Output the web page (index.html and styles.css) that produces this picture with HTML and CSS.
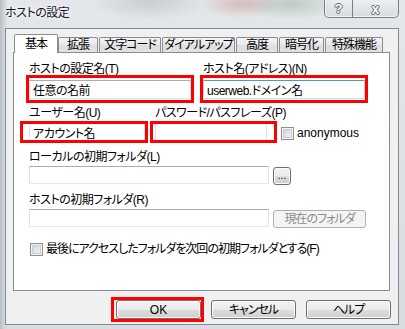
FILE: index.html
```html
<!DOCTYPE html>
<html lang="ja">
<head>
    <meta charset="UTF-8">
    <meta name="viewport" content="width=device-width, initial-scale=1.0">
    <title>ホストの設定</title>
    <link rel="stylesheet" href="styles.css">
</head>
<body>
    <div class="window">
        <div class="titlebar">
            <span class="title">ホストの設定</span>
            <div class="caption-buttons">
                <span class="cap-btn cap-help">?</span>
                <span class="cap-btn cap-close">x</span>
            </div>
        </div>

        <div class="client">
            <div class="tabs">
                <span class="tab active">基本</span>
                <span class="tab">拡張</span>
                <span class="tab">文字コード</span>
                <span class="tab">ダイアルアップ</span>
                <span class="tab">高度</span>
                <span class="tab">暗号化</span>
                <span class="tab">特殊機能</span>
            </div>

            <div class="panel">
                <div class="row row-first">
                    <div class="field">
                        <label class="field-label">ホストの設定名(T)</label>
                        <span class="mark mark-wide"><input class="text w-half" type="text" value="任意の名前"></span>
                    </div>
                    <div class="field">
                        <label class="field-label">ホスト名(アドレス)(N)</label>
                        <span class="mark mark-wide"><input class="text w-half hover" type="text" value="userweb.ドメイン名"></span>
                    </div>
                </div>

                <div class="row row-second">
                    <div class="field w-user">
                        <label class="field-label">ユーザー名(U)</label>
                        <span class="mark mark-user"><input class="text w-user" type="text" value="アカウント名"></span>
                    </div>
                    <div class="field field-pass w-pass">
                        <label class="field-label">パスワード/パスフレーズ(P)</label>
                        <span class="mark mark-pass"><input class="text w-pass" type="text" value=""></span>
                    </div>
                    <div class="check-item check-anon">
                        <span class="check"></span>
                        <span class="latin">anonymous</span>
                    </div>
                </div>

                <div class="row-block">
                    <label class="field-label">ローカルの初期フォルダ(L)</label>
                    <div class="line">
                        <input class="text w-folder" type="text" value="">
                        <button class="btn btn-browse">...</button>
                    </div>
                </div>

                <div class="row-block">
                    <label class="field-label">ホストの初期フォルダ(R)</label>
                    <div class="line">
                        <input class="text w-folder" type="text" value="">
                        <button class="btn btn-current" disabled>現在のフォルダ</button>
                    </div>
                </div>

                <div class="check-item check-last">
                    <span class="check"></span>
                    <span>最後にアクセスしたフォルダを次回の初期フォルダとする(F)</span>
                </div>
            </div>

            <div class="actions">
                <span class="mark mark-ok"><button class="btn btn-action latin">OK</button></span>
                <button class="btn btn-action">キャンセル</button>
                <button class="btn btn-action">ヘルプ</button>
            </div>
        </div>
    </div>
</body>
</html>
```

FILE: styles.css
```css
body {
    margin: 0;
    width: 405px;
    height: 329px;
    overflow: hidden;
    font-family: "Liberation Sans", "Noto Sans CJK JP", sans-serif;
    font-size: 12px;
    line-height: 14px;
    letter-spacing: -0.5px;
    font-feature-settings: "palt";
    color: #000;
}
.latin { letter-spacing: 0; }
.window {
    height: 329px;
    display: flex;
    flex-direction: column;
    background:
        radial-gradient(ellipse 40px 14px at 240px 4px, rgba(190, 110, 110, 0.35), transparent),
        radial-gradient(ellipse 50px 16px at 290px 4px, rgba(120, 150, 120, 0.35), transparent),
        radial-gradient(ellipse 60px 18px at 150px 2px, rgba(170, 175, 180, 0.45), transparent),
        linear-gradient(to right, #b9bec2 0, #d6dadd 5px, transparent 8px),
        linear-gradient(#e3e7ea, #d7dce0);
}

/* title bar */
.titlebar {
    height: 28px;
    flex: none;
    display: flex;
    align-items: flex-start;
}
.title {
    padding: 6px 0 0 5px;
    color: #14142c;
    text-shadow: 0 0 5px #fff, 0 0 3px #fff;
}
.caption-buttons {
    margin-left: auto;
    margin-right: 6px;
    display: flex;
    height: 17px;
    border: 1px solid #76808b;
    border-top: none;
    border-radius: 0 0 5px 5px;
    overflow: hidden;
    background: linear-gradient(rgba(255, 255, 255, 0.35), rgba(200, 206, 212, 0.45));
    box-shadow: inset 0 -1px 0 rgba(255, 255, 255, 0.7), inset 1px 0 0 rgba(255, 255, 255, 0.5);
}
.cap-btn {
    display: flex;
    align-items: center;
    justify-content: center;
    font-weight: bold;
    font-size: 13px;
    letter-spacing: 0;
    color: #fff;
    text-shadow: 1px 0 0 #5c6670, -1px 0 0 #5c6670, 0 1px 0 #5c6670, 0 -1px 0 #5c6670;
}
.cap-help {
    width: 27px;
    border-right: 1px solid #76808b;
}
.cap-close {
    width: 45px;
    font-size: 14px;
}

/* client area */
.client {
    flex: none;
    height: 295px;
    margin: 0 6px 0 5px;
    border: 1px solid #7f8b97;
    background: #f0f0f0;
}
.tabs {
    display: flex;
    align-items: flex-end;
    height: 18px;
    margin: 5px 0 0 8px;
    letter-spacing: -1px;
}
.tab {
    box-sizing: border-box;
    height: 15px;
    display: flex;
    align-items: center;
    justify-content: center;
    border: 1px solid #898c95;
    border-bottom: none;
    border-radius: 2px 2px 0 0;
    background: linear-gradient(#f4f4f4, #e8e8e8 50%, #dedede 51%, #e2e2e2);
    white-space: nowrap;
}
.tab + .tab { margin-left: 1px; }
.tab.active + .tab { margin-left: 0; }
.tab.active {
    position: relative;
    z-index: 1;
    height: 19px;
    margin-bottom: -1px;
    width: 44px;
    background: #fff;
}
.tab:nth-child(2) { width: 40px; }
.tab:nth-child(3) { width: 62px; }
.tab:nth-child(4) { width: 73px; }
.tab:nth-child(5) { width: 42px; }
.tab:nth-child(6) { width: 45px; }
.tab:nth-child(7) { width: 58px; }

.panel {
    box-sizing: border-box;
    width: 377px;
    height: 239px;
    margin-left: 7px;
    padding: 9px 0 0 15px;
    border: 1px solid #898c95;
    background: #fff;
}
.field-label {
    display: block;
    height: 14px;
    white-space: nowrap;
}
.row {
    display: flex;
    align-items: flex-end;
}
.row-first { gap: 12px; }
.row-first .field-label { margin-bottom: 4px; }
.row-second { margin-top: 7px; }
.row-second .field-label { margin-bottom: 3px; }
.field-pass { margin-left: 10px; }

.row-block { margin-top: 8px; }
.row-block .field-label { margin-bottom: 2px; }
.line {
    display: flex;
    align-items: flex-start;
    gap: 4px;
}

/* inputs */
.text {
    box-sizing: border-box;
    display: block;
    height: 19px;
    margin: 0;
    padding: 0 3px;
    border: 1px solid;
    border-color: #abadb3 #e2e3ea #e3e9ef #e2e3ea;
    background: #fff;
    font: inherit;
    letter-spacing: -0.5px;
    color: #000;
    outline: none;
}
.text.hover { border-color: #5794bf #b7d5ea #c7e2f1 #b7d5ea; }
.w-half { width: 162px; }
.w-user { width: 116px; flex: none; }
.w-pass { width: 112px; flex: none; }
.w-folder { width: 240px; height: 18px; }

/* buttons */
.btn {
    box-sizing: border-box;
    margin: 0;
    padding: 0;
    border: 1px solid #707070;
    border-radius: 3px;
    background: linear-gradient(#f2f2f2, #ebebeb 50%, #dddddd 51%, #cfcfcf);
    box-shadow: inset 0 0 0 1px #fbfbfb;
    font: inherit;
    letter-spacing: -1px;
    color: #000;
    line-height: 1;
}
.btn.latin { letter-spacing: 0; }
.btn-browse {
    width: 18px;
    height: 18px;
    margin-top: 1px;
    font-size: 10px;
    letter-spacing: 0;
}
.btn-current {
    width: 93px;
    height: 18px;
    margin-top: 1px;
    border-color: #adb2b5;
    background: #f4f4f4;
    box-shadow: none;
    color: #8a8a8a;
}
.actions {
    display: flex;
    justify-content: flex-end;
    gap: 10px;
    margin-top: 9px;
    padding-right: 7px;
}
.btn-action {
    display: block;
    width: 85px;
    height: 19px;
}

/* checkboxes */
.check-item {
    display: flex;
    align-items: center;
    gap: 3px;
    white-space: nowrap;
}
.check {
    box-sizing: border-box;
    width: 13px;
    height: 13px;
    flex: none;
    border: 1px solid #8f8f8f;
    background: linear-gradient(135deg, #cfd2d6, #f6f6f6);
    box-shadow: inset 0 0 0 1px #f4f4f4, inset 0 0 0 2px #c9ccd0;
}
.check-anon {
    margin-left: 14px;
    margin-bottom: 2px;
}
.check-last {
    margin-top: 14px;
    margin-left: 1px;
    letter-spacing: -1px;
}

/* red annotation frames */
.mark {
    position: relative;
    display: block;
}
.mark::after {
    content: "";
    position: absolute;
    border: 3px solid #ff0000;
    pointer-events: none;
}
.mark-wide::after { inset: -5px -3px -4px -3px; }
.mark-user::after { inset: -2px -3px -1px -9px; }
.mark-pass::after { inset: -2px -10px -1px -5px; }
.mark-ok::after { inset: -3px -3px -3px -5px; }
```
